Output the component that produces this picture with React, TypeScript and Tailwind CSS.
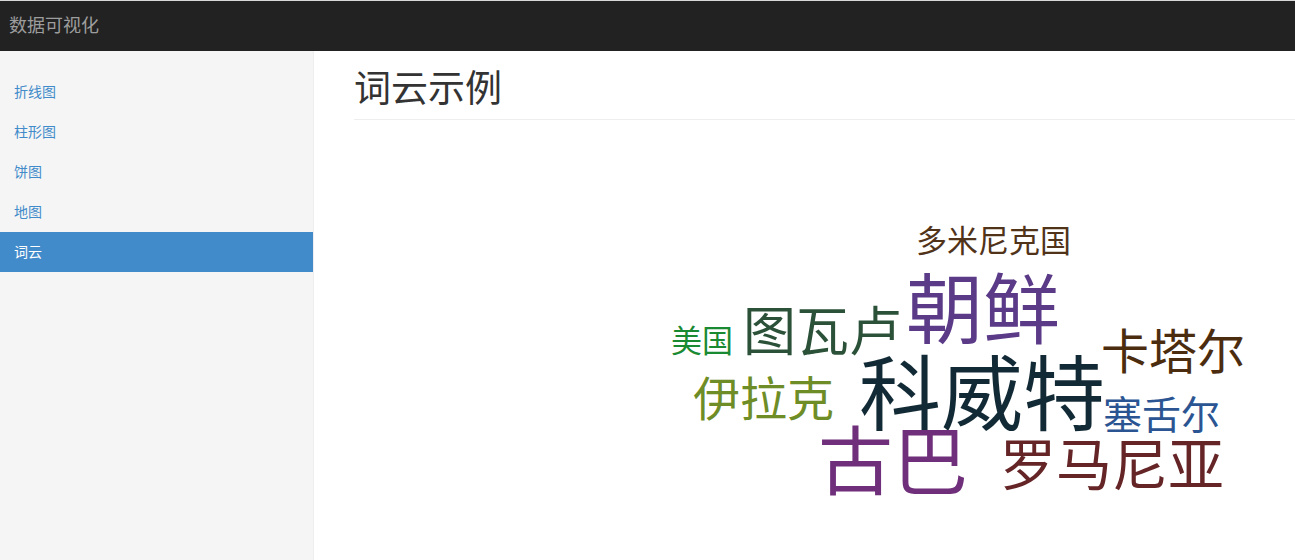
const navItems = ['折线图', '柱形图', '饼图', '地图', '词云'];

type Word = { text: string; size: number; x: number; y: number; color: string };

// positions relative to the chart area (left edge of heading, just below the rule)
const words: Word[] = [
  { text: '多米尼克国', size: 31, x: 562, y: 106, color: '#51331a' },
  { text: '朝鲜', size: 77, x: 552, y: 153, color: '#5b3a88' },
  { text: '图瓦卢', size: 53, x: 389, y: 186, color: '#2b5139' },
  { text: '美国', size: 31, x: 317, y: 206, color: '#1a8a32' },
  { text: '卡塔尔', size: 48, x: 747, y: 209, color: '#4b2c0e' },
  { text: '科威特', size: 82, x: 505, y: 235, color: '#122a35' },
  { text: '伊拉克', size: 47, x: 339, y: 256, color: '#6f8d26' },
  { text: '塞舌尔', size: 39, x: 749, y: 276, color: '#2b5592' },
  { text: '古巴', size: 75, x: 464, y: 306, color: '#6f2f7a' },
  { text: '罗马尼亚', size: 56, x: 646, y: 318, color: '#652527' },
];

function WordCloud() {
  return (
    <div className="relative flex-1 overflow-hidden">
      {words.map((w) => (
        <span
          key={w.text}
          className="absolute whitespace-nowrap leading-none"
          style={{ left: w.x, top: w.y, fontSize: w.size, color: w.color }}
        >
          {w.text}
        </span>
      ))}
    </div>
  );
}

export default function App() {
  const active = '词云';

  return (
    <div className="flex h-[560px] flex-col overflow-hidden bg-white font-['Liberation_Sans','Noto_Sans_CJK_SC',sans-serif]">
      {/* Navbar */}
      <div className="h-px bg-[#d8d8d8]" />
      <header className="flex h-[50px] shrink-0 items-center bg-[#222222] px-[9px]">
        <span className="text-[18px] leading-none text-[#9d9d9d]">数据可视化</span>
      </header>

      <div className="flex flex-1">
        {/* Sidebar */}
        <aside className="w-[314px] shrink-0 border-r border-[#eeeeee] bg-[#f5f5f5] pt-[21px]">
          <ul>
            {navItems.map((item) => (
              <li key={item}>
                <a
                  className={
                    item === active
                      ? 'flex h-[40px] items-center bg-[#428bca] px-[14px] text-[14px] text-white'
                      : 'flex h-[40px] items-center px-[14px] text-[14px] text-[#428bca]'
                  }
                >
                  {item}
                </a>
              </li>
            ))}
          </ul>
        </aside>

        {/* Main */}
        <main className="flex flex-1 flex-col pl-[40px] pt-[20px]">
          <h1 className="border-b border-[#eeeeee] pb-[11px] text-[37px] leading-none text-[#333333]">
            词云示例
          </h1>
          <WordCloud />
        </main>
      </div>
    </div>
  );
}
